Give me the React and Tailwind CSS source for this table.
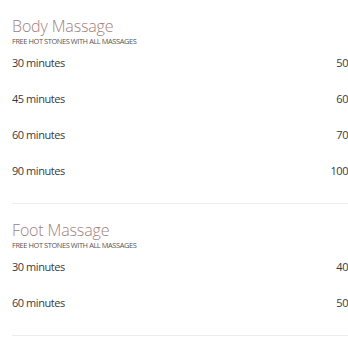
import React from 'react';

const menu = [
  {
    title: 'Body Massage',
    note: 'Free hot stones with all massages',
    items: [
      ['30 minutes', '50'],
      ['45 minutes', '60'],
      ['60 minutes', '70'],
      ['90 minutes', '100'],
    ],
  },
  {
    title: 'Foot Massage',
    note: 'Free hot stones with all massages',
    items: [
      ['30 minutes', '40'],
      ['60 minutes', '50'],
    ],
  },
];

function Section({ title, note, items }) {
  return (
    <section className="pt-[16px] pb-[22px] border-b border-[#eeeeee]">
      <h2 className="text-[16px] leading-[20px] font-light tracking-[-0.15px] text-[#9f817e]">{title}</h2>
      <p className="text-[7.4px] leading-[10px] uppercase tracking-[-0.4px] text-[#555555]">{note}</p>
      <ul className="mt-[7px] flex flex-col gap-[16px]">
        {items.map(([label, price]) => (
          <li key={label} className="flex justify-between text-[11px] leading-[20px] tracking-[-0.45px] text-[#3a3a3a]">
            <span>{label}</span>
            <span>{price}</span>
          </li>
        ))}
      </ul>
    </section>
  );
}

export default function App() {
  return (
    <div className="pl-3 font-['Open_Sans',sans-serif] bg-white">
      {menu.map((s) => (
        <Section key={s.title} {...s} />
      ))}
    </div>
  );
}
